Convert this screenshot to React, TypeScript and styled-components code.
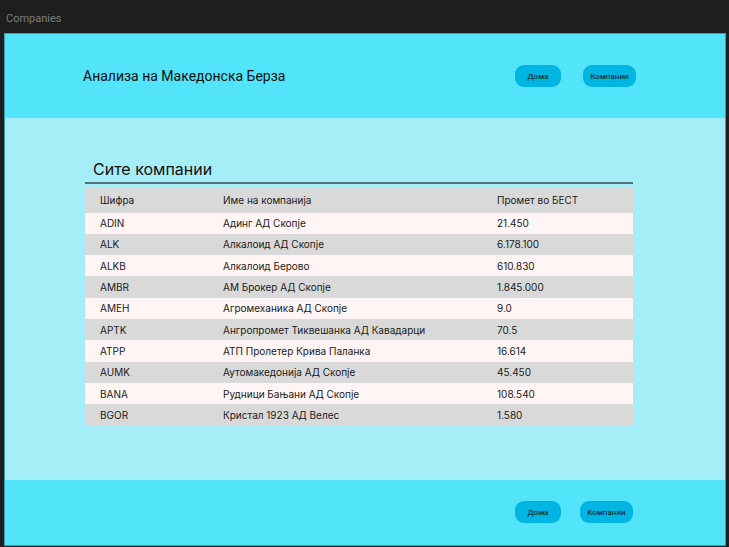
import React from "react";
import styled, { createGlobalStyle } from "styled-components";

const Global = createGlobalStyle`
  html, body { margin: 0; padding: 0; background: #1e1e1e; }
  body { width: 729px; height: 547px; overflow: hidden; }
`;

const Page = styled.div`
  display: flex;
  flex-direction: column;
  width: 729px;
  height: 547px;
  background: #1e1e1e;
  font-family: Roboto, "Noto Sans", sans-serif;
`;

const WindowLabel = styled.div`
  height: 33px;
  box-sizing: border-box;
  padding: 12px 0 0 6px;
  font-size: 11px;
  color: #7d7d7d;
  line-height: 14px;
`;

const Frame = styled.div`
  margin-left: 4px;
  width: 722px;
  height: 513px;
  box-sizing: border-box;
  border: 1px solid #3c9db3;
  display: flex;
  flex-direction: column;
`;

const Bar = styled.header<{ $h: number; $padTop: number; $padRight: number }>`
  height: ${(p) => p.$h}px;
  flex: none;
  background: #52e4f9;
  box-sizing: border-box;
  padding: ${(p) => p.$padTop}px ${(p) => p.$padRight}px 0 78px;
  display: flex;
  align-items: flex-start;
`;

const Title = styled.h1`
  margin: 0;
  flex: 1;
  font-weight: 400;
  font-size: 14px;
  line-height: 22px;
  color: #111;
  font-family: Roboto, sans-serif;
`;

const Nav = styled.nav<{ $gap: number }>`
  display: flex;
  gap: ${(p) => p.$gap}px;
`;

const NavButton = styled.button<{ $w: number }>`
  width: ${(p) => p.$w}px;
  height: 22px;
  border: none;
  border-radius: 9px;
  background: #00b5e2;
  color: #111;
  font-family: Roboto, sans-serif;
  font-size: 8px;
  padding: 0;
  cursor: pointer;
`;

const Main = styled.main`
  flex: 1;
  background: #a6eef7;
  box-sizing: border-box;
  padding: 40px 0 0 80px;
`;

const Card = styled.section`
  width: 548px;
  font-family: Inter, "Noto Sans", sans-serif;
`;

const Heading = styled.h2`
  margin: 0;
  padding: 0 0 2px 8px;
  font-weight: 400;
  font-size: 16px;
  line-height: 22px;
  color: #111;
  border-bottom: 2px solid #4e7178;
`;

const Table = styled.div`
  margin-top: 3px;
`;

const Row = styled.div<{ $alt: boolean; $h: number }>`
  display: grid;
  grid-template-columns: 123px 274px 1fr;
  align-items: center;
  height: ${(p) => p.$h}px;
  padding-left: 15px;
  background: ${(p) => (p.$alt ? "#fff5f5" : "#d9d9d9")};
  font-size: 10px;
  color: #1a1a1a;
`;

const Cell = styled.span``;

const rows: [string, string, string][] = [
  ["ADIN", "Адинг АД Скопје", "21.450"],
  ["ALK", "Алкалоид АД Скопје", "6.178.100"],
  ["ALKB", "Алкалоид Берово", "610.830"],
  ["AMBR", "АМ Брокер АД Скопје", "1.845.000"],
  ["AMEH", "Агромеханика АД Скопје", "9.0"],
  ["APTK", "Ангропромет Тиквешанка АД Кавадарци", "70.5"],
  ["ATPP", "АТП Пролетер Крива Паланка", "16.614"],
  ["AUMK", "Аутомакедонија АД Скопје", "45.450"],
  ["BANA", "Рудници Бањани АД Скопје", "108.540"],
  ["BGOR", "Кристал 1923 АД Велес", "1.580"],
];

export default function App() {
  return (
    <Page>
      <Global />
      <WindowLabel>Companies</WindowLabel>
      <Frame>
        <Bar $h={84} $padTop={31} $padRight={89}>
          <Title>Анализа на Македонска Берза</Title>
          <Nav $gap={22}>
            <NavButton $w={46}>Дома</NavButton>
            <NavButton $w={53}>Компании</NavButton>
          </Nav>
        </Bar>
        <Main>
          <Card>
            <Heading>Сите компании</Heading>
            <Table>
              <Row $alt={false} $h={25.5}>
                <Cell>Шифра</Cell>
                <Cell>Име на компанија</Cell>
                <Cell>Промет во БЕСТ</Cell>
              </Row>
              {rows.map((r, i) => (
                <Row key={r[0]} $alt={i % 2 === 0} $h={21.3}>
                  <Cell>{r[0]}</Cell>
                  <Cell>{r[1]}</Cell>
                  <Cell>{r[2]}</Cell>
                </Row>
              ))}
            </Table>
          </Card>
        </Main>
        <Bar $h={65} $padTop={21} $padRight={92}>
          <Title />
          <Nav $gap={19}>
            <NavButton $w={46}>Дома</NavButton>
            <NavButton $w={53}>Компании</NavButton>
          </Nav>
        </Bar>
      </Frame>
    </Page>
  );
}
